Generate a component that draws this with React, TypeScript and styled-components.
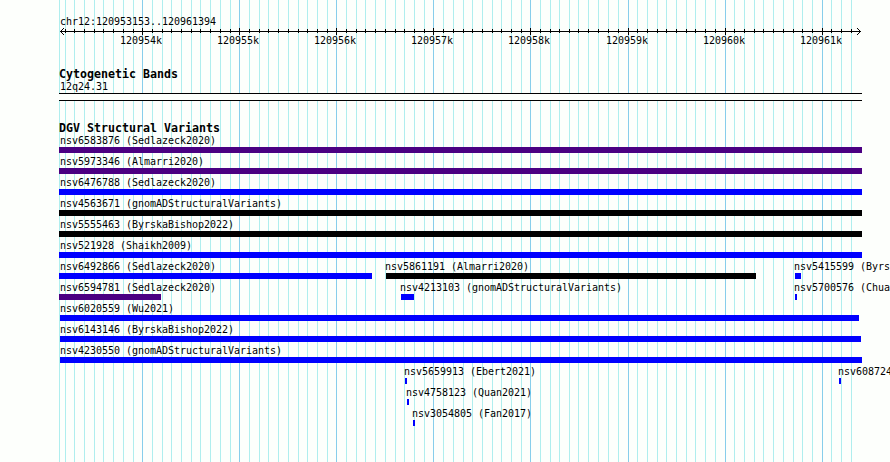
import React from "react";
import styled, { createGlobalStyle } from "styled-components";

const GlobalStyle = createGlobalStyle`
  html, body { margin: 0; padding: 0; background: #fdfffc; overflow: hidden; }
`;

const INDIGO = "#4b0082";
const BLUE = "#0000ff";
const BLACK = "#000000";

const Panel = styled.main`
  position: relative;
  box-sizing: border-box;
  width: 890px;
  height: 462px;
  overflow: hidden;
  background: #fdfffc;
  color: #000;
  font-family: "DejaVu Sans Mono", "Liberation Mono", monospace;
  font-size: 10px;
  line-height: 13px;
  letter-spacing: -0.02px;
  white-space: pre;
`;

const Gridlines = styled.svg`
  position: absolute;
  inset: 0;
  shape-rendering: crispEdges;
`;

const Tracks = styled.div`
  position: relative;
  display: flex;
  flex-direction: column;
`;

const Ruler = styled.section`
  box-sizing: border-box;
  display: flex;
  flex-direction: column;
  padding-top: 15px;
  height: 53px;
`;

const RegionName = styled.div`
  height: 13px;
  padding-left: 60px;
`;

const Axis = styled.svg`
  display: block;
  height: 7px;
  width: 890px;
  shape-rendering: crispEdges;
`;

const AxisLabels = styled.div`
  display: grid;
  height: 13px;
  line-height: 11px;
`;

const AxisLabel = styled.span<{ $x: number }>`
  grid-area: 1 / 1;
  margin-left: ${(p) => p.$x}px;
`;

const TrackTitle = styled.h2`
  margin: 0;
  padding-left: 59px;
  height: 12px;
  line-height: 13px;
  font-size: 11.63px;
  font-weight: bold;
  letter-spacing: 0;
`;

const Track = styled.section`
  display: flex;
  flex-direction: column;
  padding-top: 15px;
`;

const BandTrack = styled(Track)`
  box-sizing: border-box;
  height: 54px;
`;

const BandName = styled.div`
  height: 13px;
  padding-left: 60px;
`;

const Band = styled.div`
  box-sizing: border-box;
  margin-left: 59px;
  width: 803px;
  height: 8px;
  border: solid #000;
  border-width: 1px 0;
  background: #fdfffc;
`;

const Lane = styled.div`
  display: grid;
  height: 21px;
`;

const FeatureName = styled.span<{ $x: number }>`
  grid-area: 1 / 1;
  width: max-content;
  margin-left: ${(p) => p.$x}px;
`;

const FeatureBar = styled.i<{ $from: number; $to: number; $color: string }>`
  grid-area: 1 / 1;
  width: ${(p) => p.$to - p.$from}px;
  height: 6px;
  margin: 13px 0 0 ${(p) => p.$from}px;
  background: ${(p) => p.$color};
`;

const majors = [142, 239, 336, 433, 530, 628, 725, 822];
const minors = [
  65, 74, 84, 94, 103, 113, 123, 133, 152, 162, 171, 181, 191, 200, 210, 220, 230,
  249, 259, 268, 278, 288, 298, 307, 317, 327, 346, 356, 365, 375, 385, 395, 404,
  414, 424, 443, 453, 463, 472, 482, 492, 501, 511, 521, 540, 550, 559, 569, 578,
  588, 598, 608, 618, 637, 647, 657, 666, 676, 686, 695, 705, 715, 734, 744, 754,
  763, 773, 783, 793, 802, 812, 831, 841, 851,
];

type Feature = { name: string; x: number; from: number; to: number; color: string };
const f = (name: string, x: number, from: number, to: number, color: string): Feature => ({
  name, x, from, to, color,
});

const lanes: Feature[][] = [
  [f("nsv6583876 (Sedlazeck2020)", 60, 59, 862, INDIGO)],
  [f("nsv5973346 (Almarri2020)", 60, 59, 862, INDIGO)],
  [f("nsv6476788 (Sedlazeck2020)", 60, 59, 862, BLUE)],
  [f("nsv4563671 (gnomADStructuralVariants)", 60, 59, 862, BLACK)],
  [f("nsv5555463 (ByrskaBishop2022)", 60, 59, 862, BLACK)],
  [f("nsv521928 (Shaikh2009)", 60, 59, 862, BLUE)],
  [
    f("nsv6492866 (Sedlazeck2020)", 60, 59, 372, BLUE),
    f("nsv5861191 (Almarri2020)", 385, 386, 756, BLACK),
    f("nsv5415599 (Byrs", 794, 795, 801, BLUE),
  ],
  [
    f("nsv6594781 (Sedlazeck2020)", 60, 59, 161, INDIGO),
    f("nsv4213103 (gnomADStructuralVariants)", 400, 401, 414, BLUE),
    f("nsv5700576 (Chua", 794, 795, 797, BLUE),
  ],
  [f("nsv6020559 (Wu2021)", 60, 60, 859, BLUE)],
  [f("nsv6143146 (ByrskaBishop2022)", 60, 60, 861, BLUE)],
  [f("nsv4230550 (gnomADStructuralVariants)", 60, 60, 862, BLUE)],
  [
    f("nsv5659913 (Ebert2021)", 404, 405, 407, BLUE),
    f("nsv608724", 838, 839, 841, BLUE),
  ],
  [f("nsv4758123 (Quan2021)", 406, 407, 409, BLUE)],
  [f("nsv3054805 (Fan2017)", 412, 413, 415, BLUE)],
];

export default function App() {
  return (
    <>
      <GlobalStyle />
      <Panel>
        <Gridlines width="890" height="462">
          {[59, ...minors].map((x) => (
            <rect key={x} x={x} y="0" width="1" height="462" fill="#afeeee" />
          ))}
          {majors.map((x) => (
            <rect key={x} x={x} y="0" width="1" height="462" fill="#87ceeb" />
          ))}
        </Gridlines>
        <Tracks>
          <Ruler>
            <RegionName>chr12:120953153..120961394</RegionName>
            <Axis viewBox="0 28 890 7">
              <rect x="60" y="31" width="801" height="1" />
              {minors.map((x) => (
                <rect key={x} x={x} y="29" width="1" height="4" />
              ))}
              {majors.map((x) => (
                <rect key={x} x={x} y="28" width="1" height="7" />
              ))}
              {[1, 2, 3].map((d) => (
                <React.Fragment key={d}>
                  <rect x={60 + d} y={31 - d} width="1" height="1" />
                  <rect x={60 + d} y={31 + d} width="1" height="1" />
                  <rect x={860 - d} y={31 - d} width="1" height="1" />
                  <rect x={860 - d} y={31 + d} width="1" height="1" />
                </React.Fragment>
              ))}
            </Axis>
            <AxisLabels>
              {majors.map((x, i) => (
                <AxisLabel key={x} $x={x - 22}>{`${120954 + i}k`}</AxisLabel>
              ))}
            </AxisLabels>
          </Ruler>
          <BandTrack>
            <TrackTitle>Cytogenetic Bands</TrackTitle>
            <BandName>12q24.31</BandName>
            <Band />
          </BandTrack>
          <Track>
            <TrackTitle>DGV Structural Variants</TrackTitle>
            {lanes.map((lane, i) => (
              <Lane key={i}>
                {lane.map((v) => (
                  <React.Fragment key={v.name}>
                    <FeatureName $x={v.x}>{v.name}</FeatureName>
                    <FeatureBar $from={v.from} $to={v.to} $color={v.color} />
                  </React.Fragment>
                ))}
              </Lane>
            ))}
          </Track>
        </Tracks>
      </Panel>
    </>
  );
}
